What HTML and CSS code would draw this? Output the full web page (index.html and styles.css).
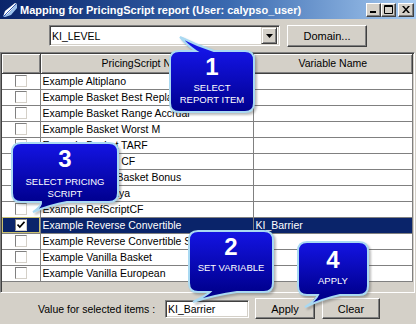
FILE: index.html
```html
<!DOCTYPE html>
<html lang="en">
<head>
    <meta charset="UTF-8">
    <meta name="viewport" content="width=device-width, initial-scale=1.0">
    <title>Mapping for PricingScript report</title>
    <link rel="stylesheet" href="styles.css">
</head>
<body>

<div class="window">
    <div class="titlebar">
        <svg class="title-icon" width="16" height="16" viewBox="0 0 16 16">
            <path d="M1 15 L3 9 L13 1 L15 2 L6 12 Z" fill="#ffffff"/>
            <path d="M1 15 L6 12 L15 2 L15 6 L9 13 L3 15 Z" fill="#9ec4ee"/>
            <path d="M1 15 L14 2" stroke="#2a58b8" stroke-width="1"/>
        </svg>
        <span class="title-text">Mapping for PricingScript report (User: calypso_user)</span>
        <div class="title-buttons">
            <div class="tb-btn">
                <svg width="8" height="7" viewBox="0 0 8 7"><rect x="0" y="5" width="6" height="2" fill="#000"/></svg>
            </div>
            <div class="tb-btn">
                <svg width="9" height="9" viewBox="0 0 9 9"><path d="M0.5 0.5 H8.5 V8.5 H0.5 Z M0.5 1.5 H8.5" stroke="#000" fill="none"/></svg>
            </div>
            <div class="tb-btn close">
                <svg width="8" height="7" viewBox="0 0 8 7"><path d="M0 0 L2 0 L4 2.5 L6 0 L8 0 L5 3.5 L8 7 L6 7 L4 4.5 L2 7 L0 7 L3 3.5 Z" fill="#000"/></svg>
            </div>
        </div>
    </div>

    <div class="toolbar">
        <div class="combo">
            <span class="combo-value">KI_LEVEL</span>
            <span class="combo-arrow">
                <svg width="7" height="4" viewBox="0 0 7 4"><path d="M0 0 H7 L3.5 4 Z" fill="#000"/></svg>
            </span>
        </div>
        <div class="btn domain">Domain...</div>
    </div>

    <div class="grid">
        <table>
            <thead>
                <tr>
                    <th class="col-check"></th>
                    <th class="col-name">PricingScript Name</th>
                    <th class="col-var">Variable Name</th>
                </tr>
            </thead>
            <tbody>
                <tr><td class="cell-check"><span class="check"></span></td><td>Example Altiplano</td><td></td></tr>
                <tr><td class="cell-check"><span class="check"></span></td><td>Example Basket Best Replace</td><td></td></tr>
                <tr><td class="cell-check"><span class="check"></span></td><td>Example Basket Range Accrual</td><td></td></tr>
                <tr><td class="cell-check"><span class="check"></span></td><td>Example Basket Worst M</td><td></td></tr>
                <tr><td class="cell-check"><span class="check"></span></td><td>Example Basket TARF</td><td></td></tr>
                <tr><td class="cell-check"><span class="check"></span></td><td>Example Basket CF</td><td></td></tr>
                <tr><td class="cell-check"><span class="check"></span></td><td>Example Worst Basket Bonus</td><td></td></tr>
                <tr><td class="cell-check"><span class="check"></span></td><td>Example Himalaya</td><td></td></tr>
                <tr><td class="cell-check"><span class="check"></span></td><td>Example RefScriptCF</td><td></td></tr>
                <tr class="selected">
                    <td class="cell-check focus"><span class="check checked">
                        <svg width="8" height="8" viewBox="0 0 8 8"><path d="M0.5 3.5 L2.8 6 L7.5 0.8" stroke="#000" stroke-width="1.7" fill="none"/></svg>
                    </span></td>
                    <td>Example Reverse Convertible</td>
                    <td>KI_Barrier</td>
                </tr>
                <tr><td class="cell-check"><span class="check"></span></td><td>Example Reverse Convertible Step</td><td></td></tr>
                <tr><td class="cell-check"><span class="check"></span></td><td>Example Vanilla Basket</td><td></td></tr>
                <tr><td class="cell-check"><span class="check"></span></td><td>Example Vanilla European</td><td></td></tr>
            </tbody>
        </table>
    </div>

    <div class="footer">
        <span class="footer-label">Value for selected items :</span>
        <div class="text-input">KI_Barrier</div>
        <div class="btn apply">Apply</div>
        <div class="btn clear">Clear</div>
    </div>

    <!-- callouts over the dialog -->
    <div class="callout c1">
        <svg class="bubble" width="124" height="101" viewBox="-20 -20 124 101">
            <defs>
                <linearGradient id="g1" x1="0" y1="0" x2="0" y2="61" gradientUnits="userSpaceOnUse">
                    <stop offset="0" stop-color="#1414e4"/>
                    <stop offset="1" stop-color="#00008e"/>
                </linearGradient>
            </defs>
            <path d="M9 0 H26 Q18 -5 10 -14 Q26 -6 44 0 H75 Q84 0 84 9 V52 Q84 61 75 61 H9 Q0 61 0 52 V9 Q0 0 9 0 Z" fill="url(#g1)" stroke="#a9d9f2" stroke-width="2"/>
        </svg>
        <div class="callout-text">
            <span class="num">1</span>
            <span class="label">SELECT<br>REPORT ITEM</span>
        </div>
    </div>

    <div class="callout c3">
        <svg class="bubble" width="146" height="99" viewBox="-20 -20 146 99">
            <defs>
                <linearGradient id="g3" x1="0" y1="0" x2="0" y2="59" gradientUnits="userSpaceOnUse">
                    <stop offset="0" stop-color="#1414e4"/>
                    <stop offset="1" stop-color="#00008e"/>
                </linearGradient>
            </defs>
            <path d="M9 0 H97 Q106 0 106 9 V50 Q106 59 97 59 H55 Q38 62 21 69 Q30 63 29 59 H9 Q0 59 0 50 V9 Q0 0 9 0 Z" fill="url(#g3)" stroke="#a9d9f2" stroke-width="2"/>
        </svg>
        <div class="callout-text">
            <span class="num">3</span>
            <span class="label">SELECT PRICING<br>SCRIPT</span>
        </div>
    </div>

    <div class="callout c2">
        <svg class="bubble" width="124" height="101" viewBox="-20 -20 124 101">
            <defs>
                <linearGradient id="g2" x1="0" y1="0" x2="0" y2="61" gradientUnits="userSpaceOnUse">
                    <stop offset="0" stop-color="#1414e4"/>
                    <stop offset="1" stop-color="#00008e"/>
                </linearGradient>
            </defs>
            <path d="M9 0 H75 Q84 0 84 9 V52 Q84 61 75 61 H48 Q26 64 4 71 Q18 64 21 61 H9 Q0 61 0 52 V9 Q0 0 9 0 Z" fill="url(#g2)" stroke="#a9d9f2" stroke-width="2"/>
        </svg>
        <div class="callout-text">
            <span class="num">2</span>
            <span class="label">SET VARIABLE</span>
        </div>
    </div>

    <div class="callout c4">
        <svg class="bubble" width="110" height="93" viewBox="-20 -20 110 93">
            <defs>
                <linearGradient id="g4" x1="0" y1="0" x2="0" y2="53" gradientUnits="userSpaceOnUse">
                    <stop offset="0" stop-color="#1414e4"/>
                    <stop offset="1" stop-color="#00008e"/>
                </linearGradient>
            </defs>
            <path d="M9 0 H61 Q70 0 70 9 V44 Q70 53 61 53 H42 Q24 57 7 65 Q18 58 20 53 H9 Q0 53 0 44 V9 Q0 0 9 0 Z" fill="url(#g4)" stroke="#a9d9f2" stroke-width="2"/>
        </svg>
        <div class="callout-text">
            <span class="num">4</span>
            <span class="label">APPLY</span>
        </div>
    </div>
</div>

</body>
</html>
```

FILE: styles.css
```css
/* dialog frame */
body {
    margin: 0;
    font-family: "Liberation Sans", Arial, sans-serif;
    font-size: 10.5px;
    color: #000;
}
.window {
    position: relative;
    width: 416px;
    height: 324px;
    background-color: #d4d0c8;
    overflow: hidden;
}

/* title bar */
.titlebar {
    height: 19px;
    display: flex;
    align-items: center;
    background: linear-gradient(to right, #0a246a 0%, #3a6ab0 55%, #a6caf0 100%);
    color: #fff;
}
.title-icon {
    margin: 0 2px 0 2px;
    flex: none;
}
.title-text {
    flex: 1;
    font-weight: bold;
    font-size: 11px;
    white-space: nowrap;
}
.title-buttons {
    display: flex;
    margin-right: 2px;
}
.tb-btn {
    width: 15px;
    height: 14px;
    box-sizing: border-box;
    background-color: #d4d0c8;
    border: 1px solid;
    border-color: #ffffff #404040 #404040 #ffffff;
    box-shadow: inset -1px -1px #808080;
    display: flex;
    align-items: center;
    justify-content: center;
}
.tb-btn.close {
    width: 16px;
    margin-left: 2px;
}

/* combo + domain button */
.toolbar {
    height: 33px;
    box-sizing: border-box;
    padding: 6px 0 0 49px;
    display: flex;
    align-items: flex-start;
}
.combo {
    width: 231px;
    height: 21px;
    box-sizing: border-box;
    background-color: #fff;
    border: 1px solid;
    border-color: #808080 #ffffff #ffffff #808080;
    box-shadow: inset 1px 1px #404040, inset -1px -1px #d4d0c8;
    display: flex;
    align-items: center;
    padding: 0 2px 0 2px;
}
.combo-value {
    flex: 1;
}
.combo-arrow {
    width: 16px;
    height: 17px;
    box-sizing: border-box;
    background-color: #d4d0c8;
    border: 1px solid;
    border-color: #d4d0c8 #404040 #404040 #d4d0c8;
    box-shadow: inset 1px 1px #fff, inset -1px -1px #808080;
    display: flex;
    align-items: center;
    justify-content: center;
}
.btn {
    box-sizing: border-box;
    height: 22px;
    background-color: #d4d0c8;
    border: 1px solid;
    border-color: #ffffff #404040 #404040 #ffffff;
    box-shadow: inset -1px -1px #808080;
    display: flex;
    align-items: center;
    justify-content: center;
    font-size: 11px;
}
.btn.domain {
    width: 80px;
    margin-left: 7px;
}

/* grid */
.grid {
    height: 241px;
    box-sizing: border-box;
    margin: 0 1px 0 0;
    border: 1px solid;
    border-color: #808080 #ffffff #ffffff #808080;
    box-shadow: inset 1px 1px #404040, inset -1px -1px #d4d0c8;
    padding: 1px;
    overflow: hidden;
}
table {
    width: 411px;
    border-collapse: collapse;
    table-layout: fixed;
}
th {
    height: 19px;
    padding: 0;
    box-sizing: border-box;
    font-weight: normal;
    background-color: #d4d0c8;
    border-right: 1px solid #404040;
    border-bottom: 1px solid #404040;
    box-shadow: inset 1px 1px #fff, inset -1px -1px #808080;
    text-align: center;
    white-space: nowrap;
}
.col-check { width: 38px; }
.col-name { width: 213px; }
td {
    height: 16px;
    padding: 0 0 0 2px;
    box-sizing: border-box;
    background-color: #fff;
    border-right: 1px solid #808080;
    border-bottom: 1px solid #808080;
    white-space: nowrap;
    overflow: hidden;
    line-height: 15px;
}
td.cell-check {
    padding: 0;
    text-align: center;
}
.check {
    display: inline-block;
    width: 12px;
    height: 12px;
    box-sizing: border-box;
    background-color: #fff;
    border: 1px solid;
    border-color: #808080 #d4d0c8 #d4d0c8 #808080;
    vertical-align: middle;
    margin-top: -1px;
}
.check.checked {
    display: inline-flex;
    align-items: center;
    justify-content: center;
}
tr.selected td {
    background-color: #0a246a;
    color: #fff;
}
td.focus {
    outline: 1px solid #c8c070;
    outline-offset: -1px;
}

/* footer */
.footer {
    height: 31px;
    display: flex;
    align-items: center;
    padding-left: 38px;
}
.footer-label {
    width: 120px;
    margin-right: 7px;
    white-space: nowrap;
}
.text-input {
    width: 84px;
    height: 18px;
    box-sizing: border-box;
    background-color: #fff;
    border: 1px solid;
    border-color: #808080 #ffffff #ffffff #808080;
    box-shadow: inset 1px 1px #404040, inset -1px -1px #d4d0c8;
    padding: 0 2px;
    line-height: 16px;
    margin-right: 6px;
}
.btn.apply {
    width: 60px;
    height: 21px;
    margin-right: 7px;
}
.btn.clear {
    width: 58px;
    height: 21px;
}

/* step callouts */
.callout {
    position: absolute;
}
.callout .bubble {
    position: absolute;
    left: -20px;
    top: -20px;
    overflow: visible;
    filter: drop-shadow(2px 2px 1px rgba(60, 60, 60, 0.35));
}
.callout-text {
    position: absolute;
    left: 0;
    top: 0;
    right: 0;
    bottom: 0;
    display: flex;
    flex-direction: column;
    align-items: center;
    color: #fff;
    font-family: "Liberation Sans", Arial, sans-serif;
}
.callout .num {
    font-size: 24px;
    font-weight: bold;
    line-height: 26px;
    margin-top: 3px;
}
.callout .label {
    font-size: 9.5px;
    line-height: 12px;
    text-align: center;
    margin-top: 2px;
}
.c1 { left: 170px; top: 51px; width: 84px; height: 61px; }
.c3 { left: 12px; top: 143px; width: 106px; height: 59px; }
.c3 .label { margin-top: 4px; }
.c2 { left: 189px; top: 231px; width: 84px; height: 61px; }
.c4 { left: 298px; top: 242px; width: 70px; height: 53px; }
.c4 .num { margin-top: 5px; }
```
